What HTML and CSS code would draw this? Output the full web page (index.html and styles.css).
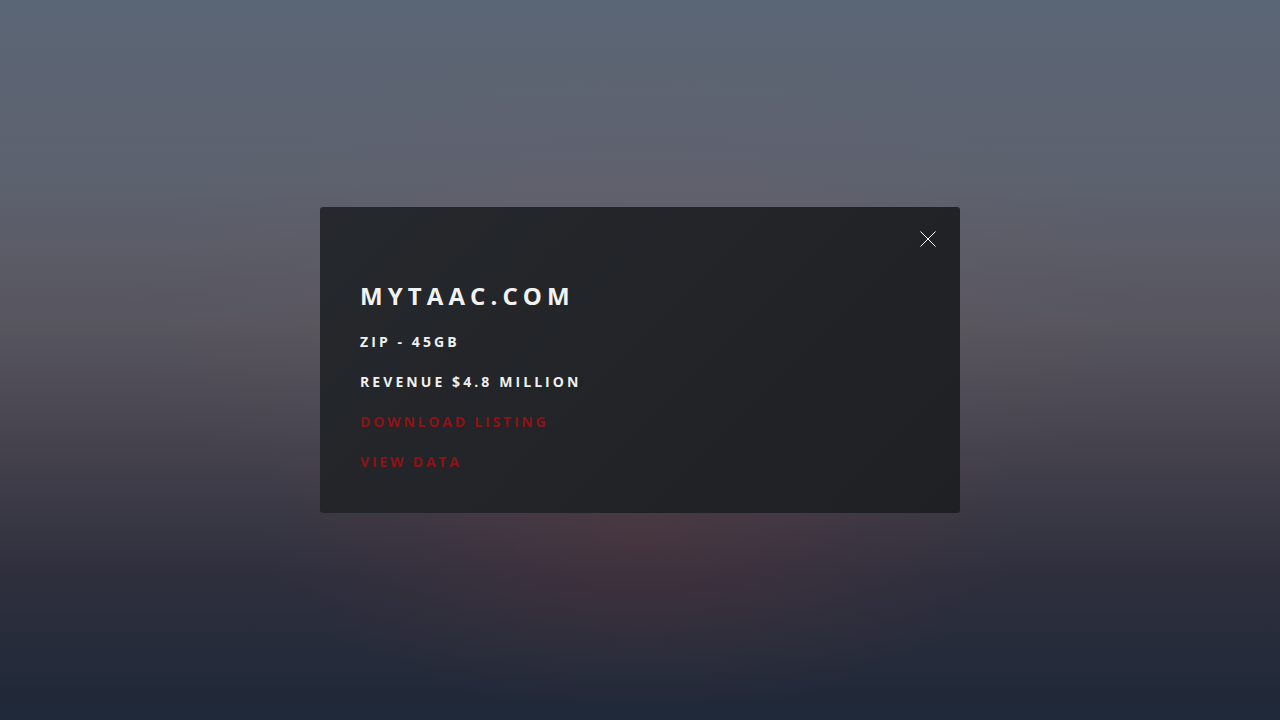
FILE: index.html
```html
<!DOCTYPE html>
<html lang="en">
<head>
    <meta charset="UTF-8">
    <meta name="viewport" content="width=device-width, initial-scale=1.0">
    <title>mytaac.com</title>
    <link rel="stylesheet" href="styles.css">
</head>
<body>
    <div class="overlay">
        <div class="modal">
            <a class="close" href="#">
                <svg width="16" height="16" viewBox="0 0 16 16">
                    <path d="M0.5 0.5 L15.5 15.5 M15.5 0.5 L0.5 15.5" stroke="#ffffff" stroke-width="1" fill="none"/>
                </svg>
            </a>
            <h1 class="title">MYTAAC.COM</h1>
            <p class="line">ZIP - 45GB</p>
            <p class="line">REVENUE $4.8 MILLION</p>
            <a class="line link" href="#">DOWNLOAD LISTING</a>
            <a class="line link" href="#">VIEW DATA</a>
        </div>
    </div>
</body>
</html>
```
FILE: styles.css
```css
body {
    margin: 0;
    font-family: "Open Sans", "Liberation Sans", sans-serif;
}
.overlay {
    width: 100vw;
    height: 100vh;
    display: flex;
    align-items: center;
    justify-content: center;
    background:
        radial-gradient(ellipse 380px 180px at 50% 74%, rgba(95, 55, 62, 0.4), rgba(95, 55, 62, 0) 100%),
        radial-gradient(ellipse 520px 260px at 50% 42%, rgba(110, 95, 100, 0.25), rgba(110, 95, 100, 0) 100%),
        linear-gradient(to bottom, #5a6575 0%, #5d626f 25%, #57555e 45%, #45424d 62%, #2e2f3d 80%, #1e2838 100%);
}
.modal {
    position: relative;
    box-sizing: border-box;
    width: 640px;
    height: 306px;
    padding: 74px 40px 0 40px;
    border-radius: 3px;
    background: linear-gradient(135deg, #25282c 0%, #222428 50%, #1f2024 100%);
    display: flex;
    flex-direction: column;
    align-items: flex-start;
    gap: 20px;
}
.close {
    position: absolute;
    top: 24px;
    right: 24px;
    width: 16px;
    height: 16px;
    display: block;
}
.close svg {
    display: block;
}
.title {
    margin: 0 0 1px 0;
    font-size: 24px;
    line-height: 30px;
    font-weight: 700;
    letter-spacing: 5.1px;
    color: #f2f2f2;
}
.line {
    margin: 0;
    font-size: 14px;
    line-height: 20px;
    font-weight: 700;
    letter-spacing: 3.08px;
    color: #f0f0f0;
    text-decoration: none;
}
.link {
    color: #8e1216;
    letter-spacing: 2.8px;
}
```
